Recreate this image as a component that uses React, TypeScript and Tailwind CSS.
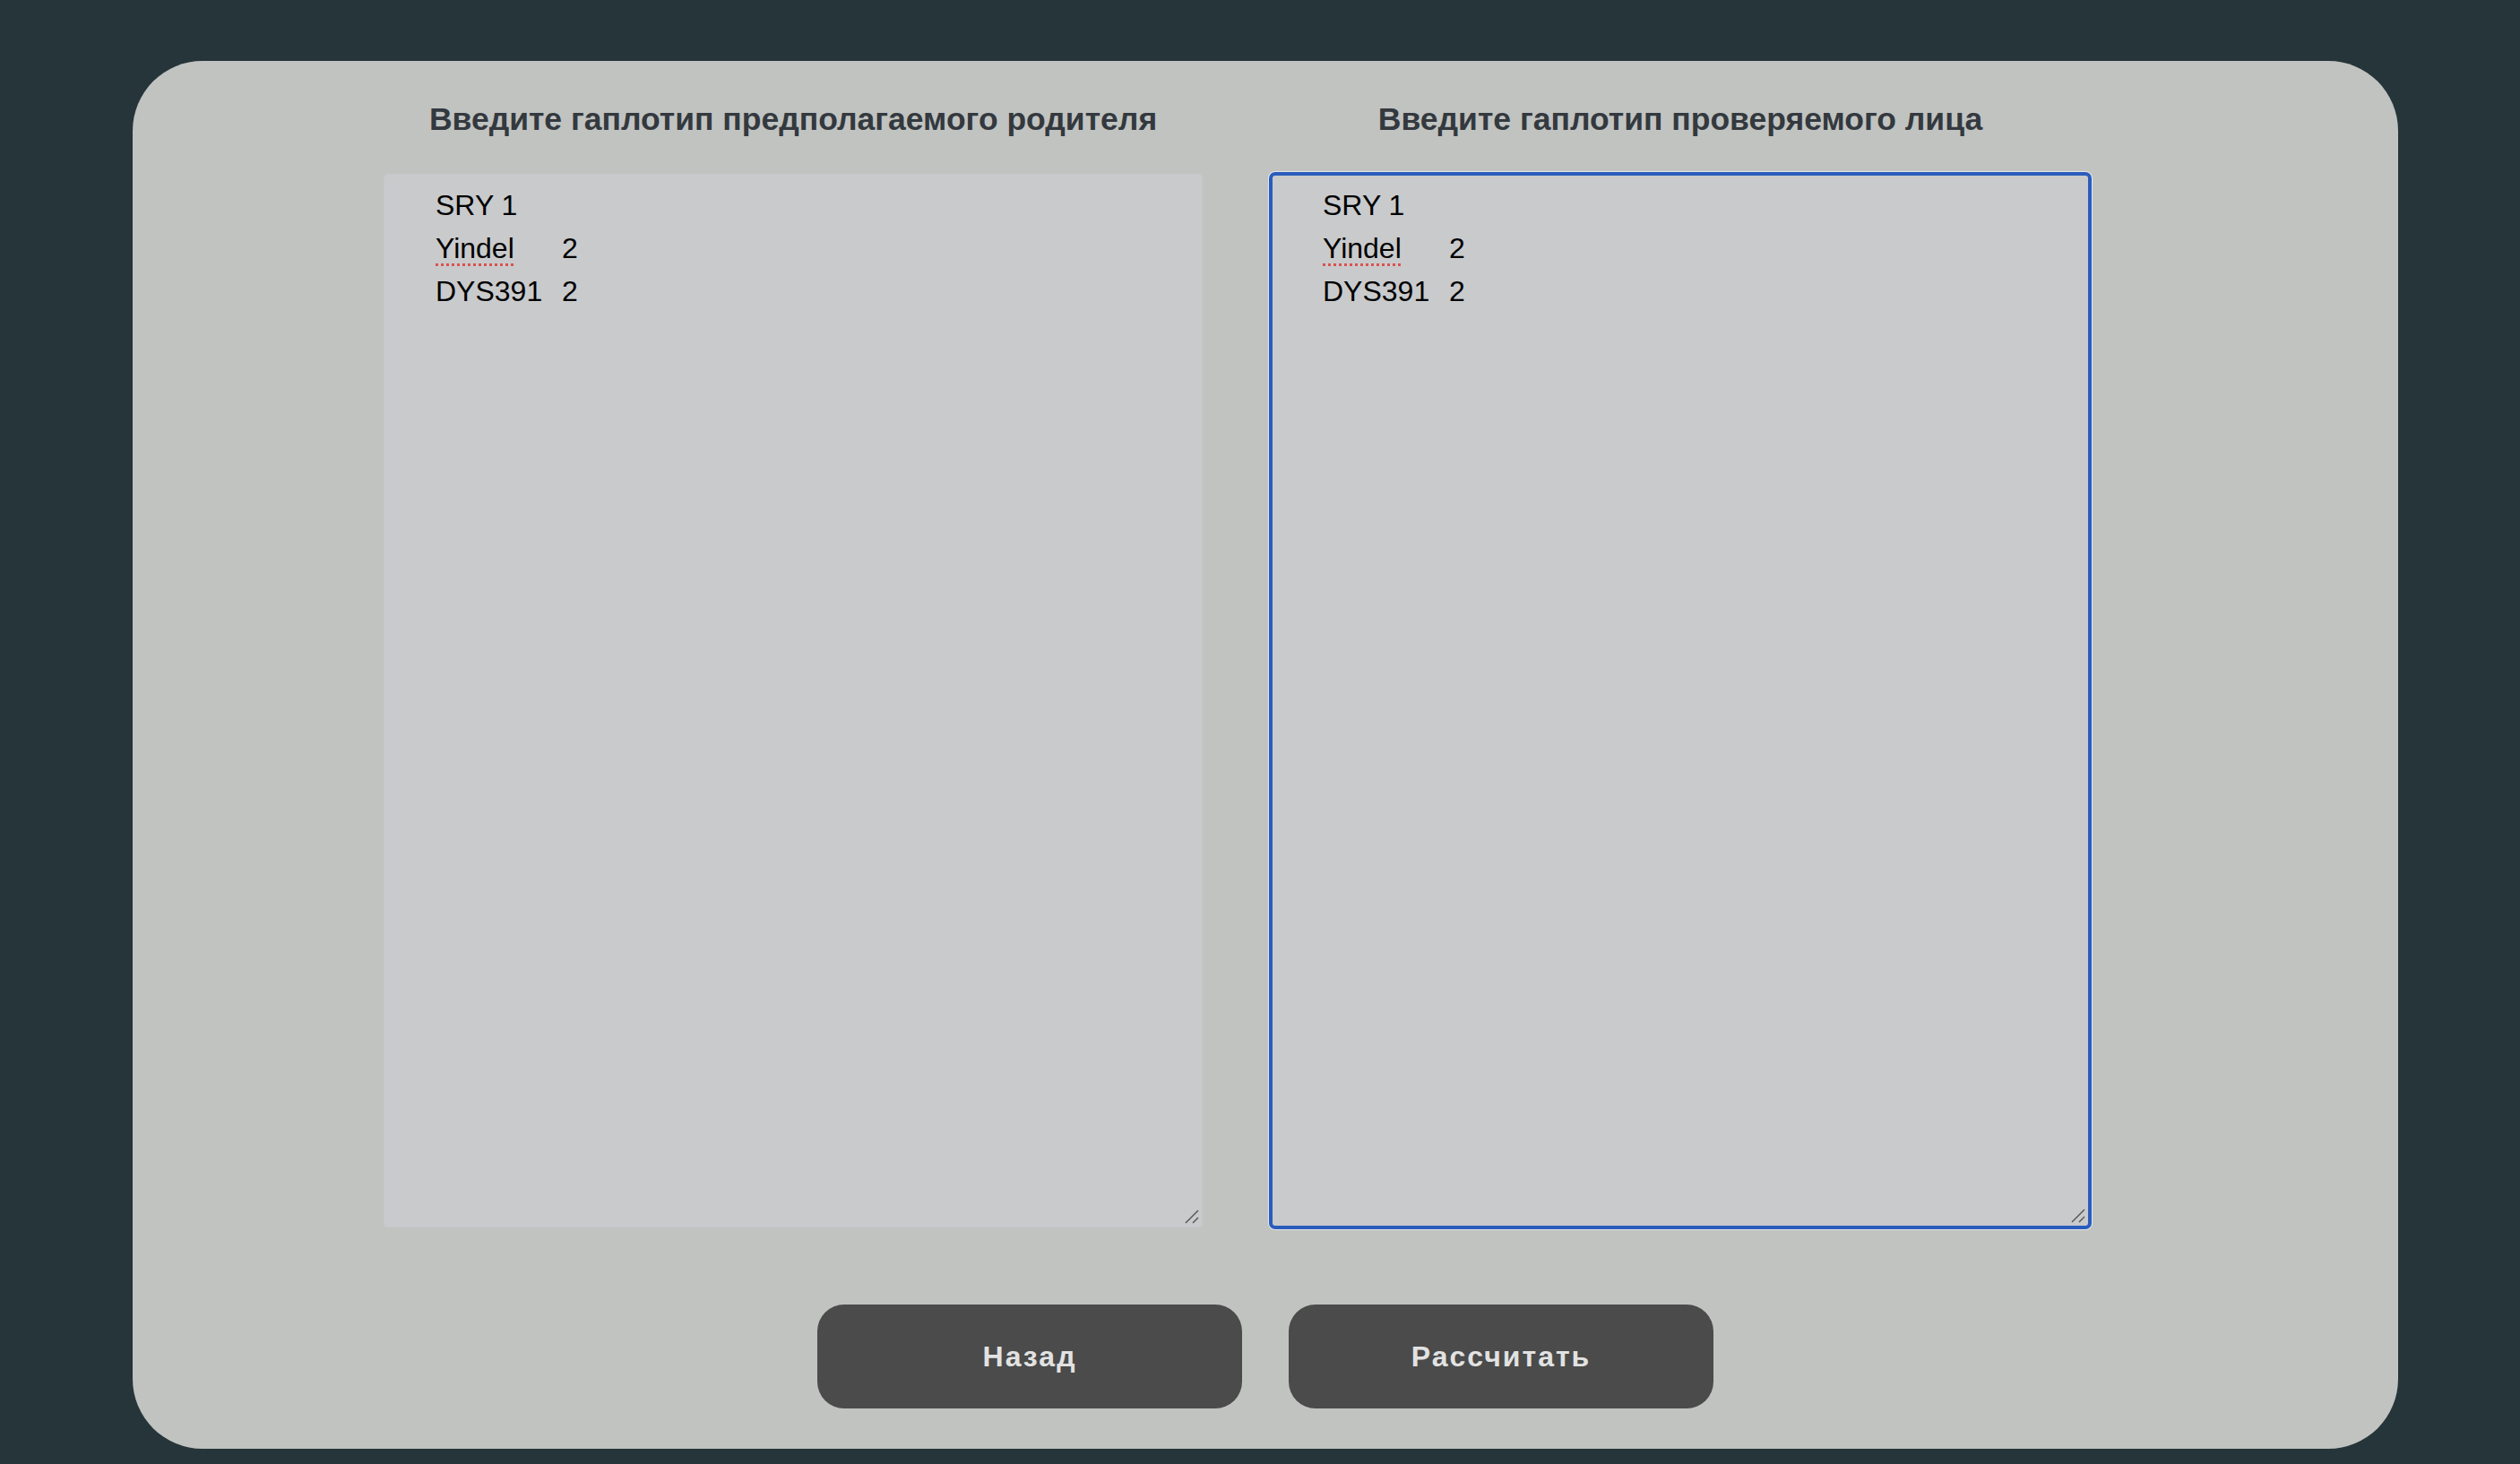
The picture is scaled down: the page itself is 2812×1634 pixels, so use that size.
import React from "react";

type Row = { name: string; value: string; misspelled?: boolean; tab?: boolean };

const rows: Row[] = [
  { name: "SRY", value: "1" },
  { name: "Yindel", value: "2", misspelled: true, tab: true },
  { name: "DYS391", value: "2", tab: true },
];

function ResizeGrip() {
  return (
    <svg className="absolute bottom-[3px] right-[3px]" width="16" height="16" viewBox="0 0 16 16">
      <line x1="1" y1="15" x2="15" y2="1" stroke="#555" strokeWidth="1.5" />
      <line x1="9" y1="15" x2="15" y2="9" stroke="#555" strokeWidth="1.5" />
    </svg>
  );
}

function HaploBox({ title, focused }: { title: string; focused?: boolean }) {
  return (
    <div className="flex w-[914px] flex-col items-center">
      <div className="text-[35.5px] font-bold leading-[39px] text-[#33393e]">{title}</div>
      <div
        className={
          focused
            ? "relative mt-[41px] h-[1176px] w-full rounded-[5px] border-2 border-[#2a5cbd] bg-[#c9cacc] pl-[56px] pt-[9px] shadow-[0_0_0_2px_#2a5cbd,0_0_0_3px_#e4e6e8]"
            : "relative mt-[41px] h-[1176px] w-full rounded-[4px] border border-[#c2c8cd] bg-[#c9cacc] pl-[57px] pt-[10px]"
        }
      >
        <div className="whitespace-pre text-[32px] leading-[48px] text-black [tab-size:141px]">
          {rows.map((r) => (
            <div key={r.name}>
              <span className={r.misspelled ? "underline decoration-[#d9534f] decoration-dotted decoration-[3px] underline-offset-[6px]" : ""}>
                {r.name}
              </span>
              {r.tab ? "\t" : " "}
              {r.value}
            </div>
          ))}
        </div>
        <ResizeGrip />
      </div>
    </div>
  );
}

export default function App() {
  return (
    <div className="min-h-screen bg-[#263539] pl-[148px] pr-[136px] pt-[68px] font-['Liberation_Sans',Arial,sans-serif]">
      <div className="h-[1549px] rounded-[78px] bg-[#c1c3c1] pt-[46px]">
        <div className="flex gap-[76px] pl-[280px]">
          <HaploBox title="Введите гаплотип предполагаемого родителя" />
          <HaploBox title="Введите гаплотип проверяемого лица" focused />
        </div>
        <div className="mt-[86px] flex justify-center gap-[52px]">
          <button className="h-[116px] w-[474px] rounded-[30px] bg-[#4a4b4a] text-[32px] font-bold tracking-[2px] text-[#e2e2e2]">
            Назад
          </button>
          <button className="h-[116px] w-[474px] rounded-[30px] bg-[#4a4b4a] text-[32px] font-bold tracking-[2px] text-[#e2e2e2]">
            Рассчитать
          </button>
        </div>
      </div>
    </div>
  );
}
